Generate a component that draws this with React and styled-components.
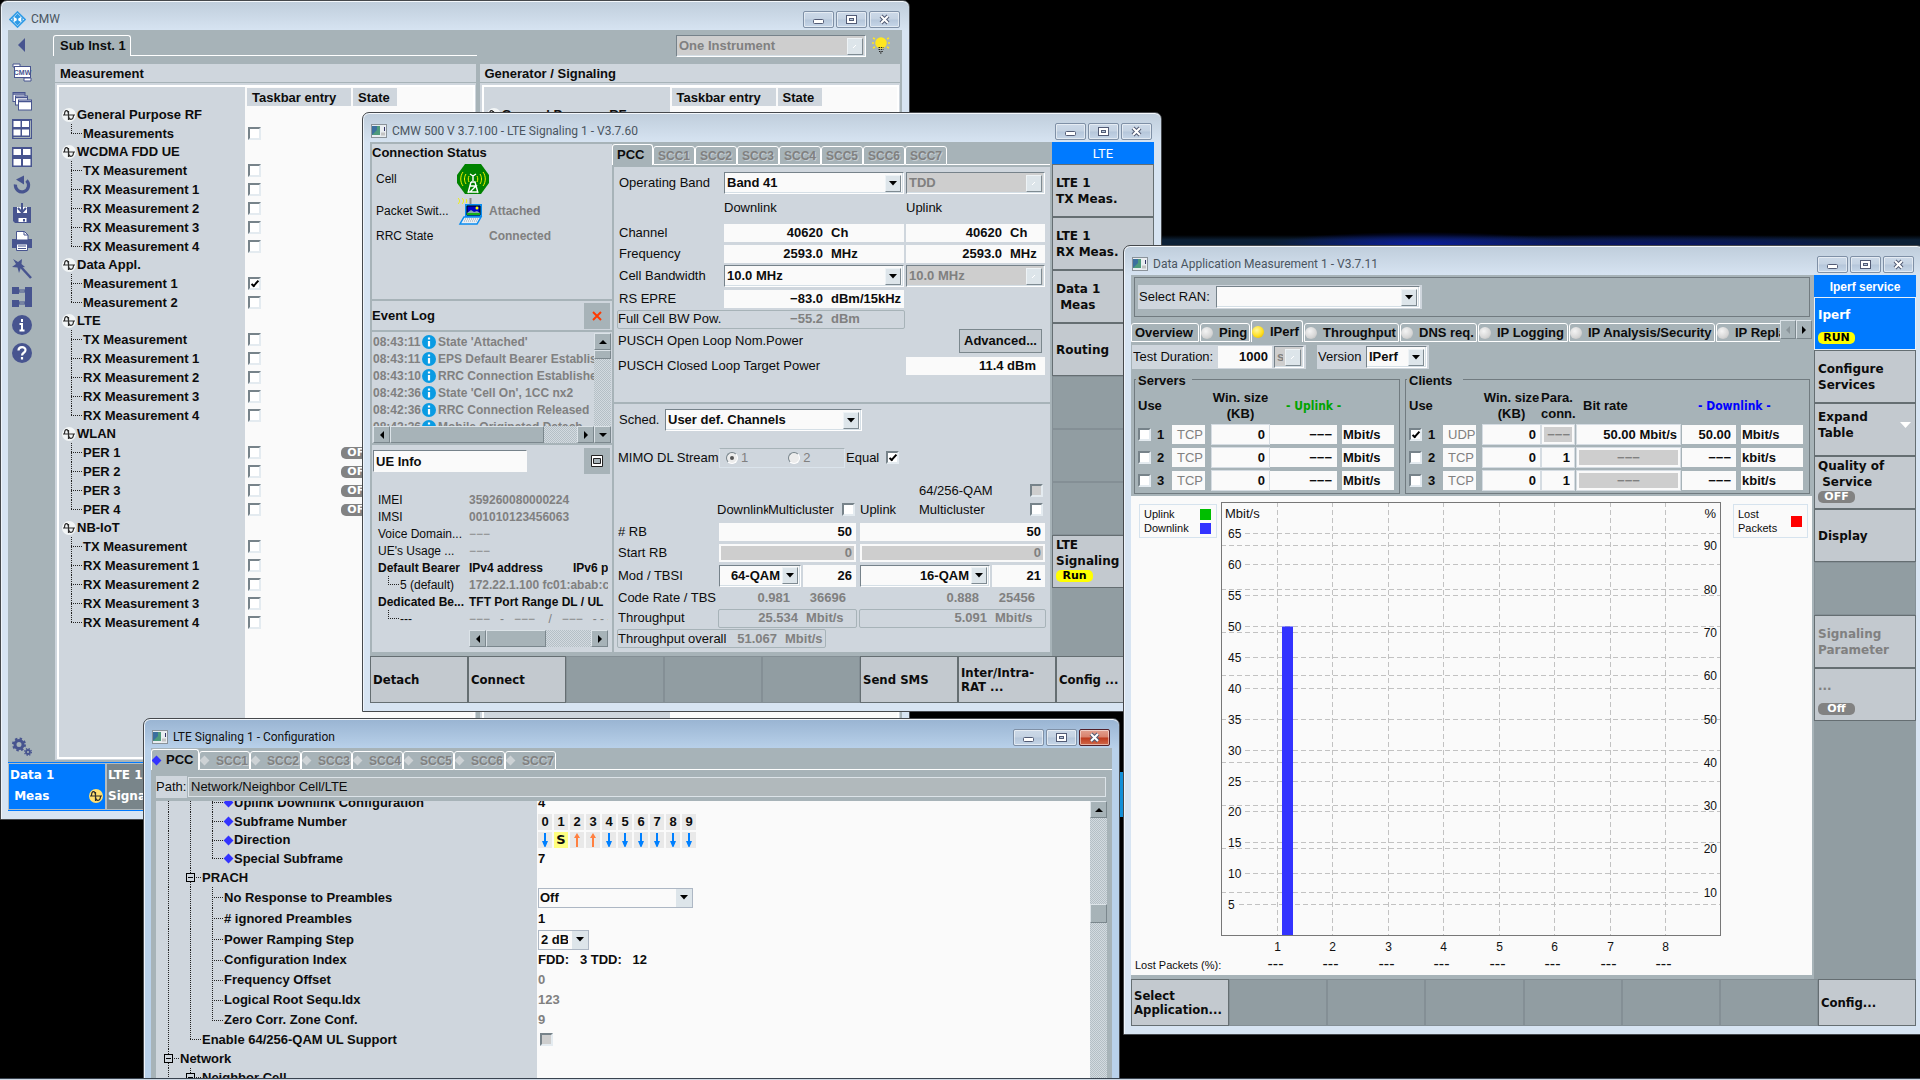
import React from "react";
import styled, { createGlobalStyle, css } from "styled-components";

const sans = '"Liberation Sans", Arial, sans-serif';
const keyFont = '"DejaVu Sans", Verdana, sans-serif';
const keyFontNarrow = '"DejaVu Sans Condensed", "DejaVu Sans", Tahoma, sans-serif';
const titleFont = 'Roboto, "Noto Sans", sans-serif';

const c = {
  base: "#a7b3b8",
  panel: "#cfd6dd",
  paper: "#fafafa",
  grey: "#808080",
  off: "#cecece",
  slot: "#919da2",
  key: "#c3c9cf",
  keyEdge: "#656e72",
  blue: "#007aff",
  icon: "#47548f",
};

const Global = createGlobalStyle`
  *, *::before, *::after { box-sizing: border-box; }
  body { margin: 0; background: #000; overflow: hidden; }
  button, input, select, fieldset, table { font: inherit; color: inherit; margin: 0; }
  ul, h2, h3, p { margin: 0; padding: 0; font: inherit; list-style: none; }
  svg { flex: none; }
`;

/* ---------- desktop and windows ---------- */

const Desktop = styled.main`
  position: relative;
  height: 100vh;
  overflow: hidden;
  background:
    linear-gradient(#118fd8, #118fd8) 1119px 772px / 5px 45px no-repeat,
    radial-gradient(ellipse 150px 12px at 1420px 244px, #0a1c9c, transparent) 0 0 / 100% 250px no-repeat,
    radial-gradient(ellipse 260px 12px at 1640px 246px, #08126c, transparent) 0 0 / 100% 250px no-repeat,
    linear-gradient(transparent 235px, #0c2036 240px) 0 0 / 100% 250px no-repeat,
    #000;
  color: #0c0c0c;
  font: bold 13px/16px ${sans};
  white-space: pre;
`;

const Taskbar = styled.footer`
  position: absolute;
  left: 0;
  right: 0;
  bottom: 0;
  height: 2px;
  background: #cfd9e4;
  border-top: 1px solid #39434f;
`;

const Frame = styled.section`
  position: absolute;
  left: ${(p) => p.$x}px;
  top: ${(p) => p.$y}px;
  width: ${(p) => p.$w}px;
  height: ${(p) => p.$h}px;
  display: flex;
  flex-direction: column;
  padding: 0 7px 8px;
  border: 1px solid #45484c;
  border-radius: 7px 7px 0 0;
  box-shadow: inset 0 1px 0 #f4f8fc, inset 1px 0 0 #eef4fb;
  background: ${(p) =>
    p.$active
      ? "linear-gradient(#99b4d2, #b9d1ea 30px)"
      : "linear-gradient(#bfcddb, #d7e4f2 30px)"};
`;

const TitleBar = styled.header`
  flex: none;
  height: 29px;
  display: flex;
  align-items: center;
  gap: 5px;
  padding: 7px 2px 0 1px;
  color: ${(p) => (p.$active ? "#101010" : "#4a5560")};
  font: 12px/18px ${titleFont};
`;

const Title = styled.h2`
  flex: 1;
`;

const CaptionButtons = styled.div`
  display: flex;
  gap: 2px;
`;

const Caption = styled.button`
  width: 31px;
  height: 17px;
  display: grid;
  place-items: center;
  padding: 0;
  border: 1px solid ${(p) => (p.$red ? "#52202a" : "#7f90a6")};
  border-radius: 2px;
  box-shadow: inset 0 0 0 1px #ffffff80;
  background: ${(p) =>
    p.$red
      ? "linear-gradient(#e2a090, #d8816c 48%, #bd3a1e 52%, #d0694a)"
      : "linear-gradient(#ccd9e8, #c4d2e2 48%, #b5c6da 52%, #c6d6e8)"};
`;

const Client = styled.div`
  flex: 1;
  min-height: 0;
  display: flex;
  flex-direction: column;
  overflow: hidden;
  background: ${c.base};
`;

function AppIcon() {
  return (
    <svg width="16" height="14" viewBox="0 0 16 14">
      <rect x=".5" y=".5" width="15" height="13" fill="#e9edf1" stroke="#8a9299" />
      <rect x="1" y="2" width="8" height="9" fill="#4d9a7c" />
      <path d="M1 2h5v4l-5 5z" fill="#3b6f9e" />
      <path d="M13.500 3v4" stroke="#336" strokeWidth="1" />
      <path d="M10 10h4" stroke="#c3c3c3" strokeWidth="3" />
    </svg>
  );
}

function RsIcon() {
  return (
    <svg width="17" height="17" viewBox="0 0 17 17">
      <path d="M8.500 1 16 8.500 8.500 16 1 8.500z" fill="#fff" stroke="#2f9be6" strokeWidth="1.600" />
      <path d="M5 6l3.500-3.500L12 6 8.500 8zM5 11l3.500 3.500L12 11 8.500 9z" fill="#2f9be6" />
      <path d="M4 6.500v4M13 6.500v4M8.500 4v9" stroke="#2f9be6" strokeWidth="1.500" />
    </svg>
  );
}

function Window({ title, icon, active, x, y, w, h, children }) {
  return (
    <Frame $x={x} $y={y} $w={w} $h={h} $active={active} aria-label={title}>
      <TitleBar $active={active}>
        {icon || <AppIcon />}
        <Title>{title}</Title>
        <CaptionButtons>
          <Caption aria-label="Minimize">
            <svg width="13" height="11" viewBox="0 0 13 11">
              <rect x="1.500" y="5.500" width="10" height="4" rx="1" fill="#fff" stroke="#525b75" />
            </svg>
          </Caption>
          <Caption aria-label="Maximize">
            <svg width="13" height="11" viewBox="0 0 13 11">
              <rect x="1.500" y="1.500" width="10" height="8" fill="#fff" stroke="#525b75" />
              <rect x="4.500" y="4.500" width="4" height="2" fill="#b9c8da" stroke="#525b75" />
            </svg>
          </Caption>
          <Caption $red={active} aria-label="Close">
            <svg width="13" height="11" viewBox="0 0 13 11">
              <path d="M3 2l7 7M10 2l-7 7" stroke="#525b75" strokeWidth="4" />
              <path d="M3 2l7 7M10 2l-7 7" stroke="#fff" strokeWidth="2" />
            </svg>
          </Caption>
        </CaptionButtons>
      </TitleBar>
      <Client>{children}</Client>
    </Frame>
  );
}

/* ---------- shared controls ---------- */

const Check = styled.input.attrs({ type: "checkbox" })`
  appearance: none;
  flex: none;
  width: 13px;
  height: 13px;
  display: inline-grid;
  place-items: center;
  background: ${(p) => (p.disabled ? c.off : "#fff")};
  border: 2px solid;
  border-color: #77838a #e4ebf0 #e4ebf0 #77838a;
  &:checked::after {
    content: "";
    width: 8px;
    height: 4px;
    margin-top: -2px;
    border: solid #000;
    border-width: 0 0 2px 2px;
    rotate: -48deg;
  }
`;

const Radio = styled.input.attrs({ type: "radio" })`
  appearance: none;
  width: 12px;
  height: 12px;
  display: inline-grid;
  place-items: center;
  border-radius: 50%;
  background: #ececec;
  border: 1px solid;
  border-color: #77838a #fff #fff #77838a;
  &:checked::after {
    content: "";
    width: 4px;
    height: 4px;
    border-radius: 50%;
    background: #555;
  }
`;

const SelectBox = styled.span`
  display: grid;
  width: ${(p) => (p.$w ? p.$w + "px" : "100%")};
  height: ${(p) => p.$h || 22}px;
  background: ${(p) => (p.$off ? c.off : c.paper)};
  color: ${(p) => (p.$off ? c.grey : "inherit")};
  border: 1px solid;
  border-color: ${(p) => (p.$flat ? "#adb7c4" : "#76828a #fff #fff #76828a")};
  box-shadow: ${(p) => (p.$flat ? "none" : "inset -1px -1px 0 #d5dfe6")};
  & > * { grid-area: 1 / 1; }
`;

const NativeSelect = styled.select`
  appearance: none;
  min-width: 0;
  border: 0;
  outline: 0;
  opacity: 1;
  background: transparent;
  padding: 0 20px 0 ${(p) => p.$pad || 2}px;
  text-align: ${(p) => (p.$right ? "right" : "left")};
  text-align-last: ${(p) => (p.$right ? "right" : "left")};
`;

const Arrow = styled.span`
  justify-self: end;
  align-self: center;
  width: 16px;
  height: ${(p) => (p.$flat ? "100%" : "17px")};
  margin-right: ${(p) => (p.$flat ? 0 : 2)}px;
  display: grid;
  place-items: center;
  pointer-events: none;
  background: #dde5ea;
  color: ${(p) => (p.$off ? "#fff" : "#000")};
  border: ${(p) => (p.$flat ? 0 : 1)}px solid;
  border-color: #eef3f6 #7f8b92 #7f8b92 #eef3f6;
`;

function Select({ label, value, off, flat, w, h, right, pad, id }) {
  return (
    <SelectBox $w={w} $h={h} $off={off} $flat={flat}>
      <NativeSelect id={id} aria-label={label} disabled={off} $right={right} $pad={pad}>
        <option>{value}</option>
      </NativeSelect>
      <Arrow $off={off} $flat={flat}>
        <svg width="8" height="5" viewBox="0 0 8 5">
          {off ? <path d="M2 4l3-3" stroke="currentColor" /> : <path d="M0 0h8L4 4.500z" fill="currentColor" />}
        </svg>
      </Arrow>
    </SelectBox>
  );
}

const FieldBox = styled.span`
  display: flex;
  align-items: center;
  flex: ${(p) => (p.$w ? "none" : 1)};
  width: ${(p) => (p.$w ? p.$w + "px" : "auto")};
  min-width: 0;
  height: ${(p) => p.$h || 18}px;
  background: ${(p) => (p.$off ? c.off : c.paper)};
  color: ${(p) => (p.$off ? c.grey : "inherit")};
  border: ${(p) => (p.$off ? "2px solid #fafafa" : 0)};
`;

const FieldInput = styled.input`
  flex: 1;
  min-width: 0;
  width: 0;
  border: 0;
  outline: 0;
  padding: 0 ${(p) => p.$pad}px 0 3px;
  background: transparent;
  text-align: ${(p) => p.$align || "right"};
`;

const Unit = styled.span`
  flex: none;
  width: ${(p) => p.$w}px;
  text-align: left;
`;

function Field({ label, value, unit, unitW, off, w, h, pad = 4, align, id }) {
  return (
    <FieldBox $w={w} $h={h} $off={off}>
      <FieldInput id={id} aria-label={label} defaultValue={value} disabled={off} $align={align} $pad={unit ? 8 : pad} />
      {unit && <Unit $w={unitW}>{unit}</Unit>}
    </FieldBox>
  );
}

const hatch = css`
  background: repeating-conic-gradient(#b4bfc5 0 25%, #d3dae0 0 50%) 0 0 / 2px 2px;
`;

const Bar = styled.div`
  ${hatch}
  display: flex;
  flex-direction: ${(p) => (p.$vertical ? "column" : "row")};
  flex: none;
  ${(p) => (p.$vertical ? "width: 17px;" : "height: 17px;")}
`;

const BarButton = styled.button`
  flex: none;
  width: 17px;
  height: 17px;
  display: grid;
  place-items: center;
  padding: 0;
  background: ${c.base};
  color: ${(p) => (p.disabled ? "#8a9499" : "#000")};
  border: 1px solid;
  border-color: #dce3e8 #7b878d #7b878d #dce3e8;
`;

const Thumb = styled.div`
  flex: none;
  ${(p) => (p.$vertical ? `height: ${p.$size}px;` : `width: ${p.$size}px;`)}
  background: ${c.base};
  border: 1px solid;
  border-color: #dce3e8 #7b878d #7b878d #dce3e8;
`;

const Space = styled.div`
  flex: ${(p) => (p.$size ? "none" : 1)};
  flex-basis: ${(p) => (p.$size ? p.$size + "px" : 0)};
`;

const arrows = {
  left: "M6 0v8L2 4z",
  right: "M2 0v8l4-4z",
  up: "M0 6h8L4 2z",
  down: "M0 2h8L4 6z",
};

function ArrowButton({ dir, disabled }) {
  return (
    <BarButton aria-label={"Scroll " + dir} disabled={disabled}>
      <svg width="8" height="8" viewBox="0 0 8 8">
        <path d={arrows[dir]} fill="currentColor" />
      </svg>
    </BarButton>
  );
}

/* ---------- tabs ---------- */

const TabStrip = styled.div`
  flex: none;
  display: flex;
  align-items: flex-end;
  height: ${(p) => p.$h}px;
  width: ${(p) => (p.$w ? p.$w + "px" : "auto")};
  min-width: 0;
  background: ${c.base};
`;

const Tab = styled.button`
  flex: none;
  width: ${(p) => p.$w}px;
  height: ${(p) => p.$h || 19}px;
  display: flex;
  align-items: center;
  gap: ${(p) => p.$gap || 0}px;
  padding: 0 0 0 ${(p) => p.$pad}px;
  overflow: hidden;
  background: ${c.base};
  border: solid #fff;
  border-width: 1px 1px ${(p) => (p.$active ? 0 : 1)}px 1px;
  border-radius: 3px 3px 0 0;
  color: ${(p) => (p.disabled ? "#808080" : "inherit")};
  font-size: ${(p) => (p.disabled ? 12 : 13)}px;
  text-shadow: ${(p) => (p.disabled ? "1px 1px 0 #c6ced3" : "none")};
`;

const TabFill = styled.div`
  flex: 1;
  align-self: stretch;
  border-bottom: 1px solid #fff;
`;

const Diamond = styled.i`
  flex: none;
  width: 7px;
  height: 7px;
  margin: 1px 2px 1px 1px;
  rotate: 45deg;
  background: ${(p) => p.$color};
`;

/* ---------- soft keys ---------- */

const KeyButton = styled.button`
  height: ${(p) => p.$h}px;
  min-width: 0;
  display: flex;
  flex-direction: column;
  justify-content: center;
  padding: 0 0 ${(p) => p.$pb}px ${(p) => (p.$narrow ? 2 : 3)}px;
  overflow: hidden;
  text-align: left;
  background: ${(p) => (p.$on ? c.blue : c.key)};
  border: 1px solid ${(p) => (p.$on ? "#e8f0f8" : c.keyEdge)};
  color: ${(p) => (p.$on ? "#fff" : p.disabled ? "#808080" : "#0c0c0c")};
  font: bold ${(p) => (p.$narrow ? 13 : 12)}px/${(p) => (p.$narrow ? 14 : 16)}px
    ${(p) => (p.$narrow ? keyFontNarrow : keyFont)};
  white-space: pre;
`;

const KeyText = styled.span`
  flex: 1;
  display: flex;
  align-items: center;
  justify-content: space-between;
  padding-right: 4px;
`;

const Badge = styled.span`
  flex: none;
  width: 37px;
  height: 12px;
  border-radius: 5px;
  text-align: center;
  background: ${(p) => (p.$run ? "#ffff00" : "#828282")};
  color: ${(p) => (p.$run ? "#000" : "#fff")};
  font: bold 11px/12px ${keyFont};
`;

const Slot = styled.div`
  height: ${(p) => p.$h}px;
  background: ${c.slot};
  border: solid #848f95;
  border-width: 1px;
`;

const KeyColumn = styled.aside`
  flex: none;
  width: 102px;
  display: flex;
  flex-direction: column;
  background: ${c.slot};
`;

const KeyHead = styled.h3`
  height: 22px;
  background: ${c.blue};
  color: #fff;
  text-align: center;
  font: ${(p) => (p.$small ? "bold" : "normal")} ${(p) => (p.$small ? 12 : 13)}px/24px
    ${(p) => (p.$small ? sans : titleFont)};
`;

const KeyRow = styled.footer`
  flex: none;
  display: grid;
  grid-template-columns: repeat(8, 1fr);
`;

function Key({ text, badge, run, on, disabled, narrow, drop, h = 53 }) {
  return (
    <KeyButton $h={h} $on={on} $narrow={narrow} $pb={badge ? 5 : drop ? 10 : 0} disabled={disabled}>
      <KeyText>
        {text}
        {drop && (
          <svg width="11" height="6" viewBox="0 0 11 6">
            <path d="M0 0h11L5.500 6z" fill="#fff" />
          </svg>
        )}
      </KeyText>
      {badge && <Badge $run={run}>{badge}</Badge>}
    </KeyButton>
  );
}

function KeyFooter({ keys }) {
  return (
    <KeyRow>
      {keys.map((k, i) => (k ? <Key key={i} text={k} narrow h={47} /> : <Slot key={i} $h={47} />))}
    </KeyRow>
  );
}

/* ---------- tree guides ---------- */

const dotsY = "repeating-linear-gradient(to bottom, #222 0 1px, transparent 1px 2px)";
const dotsX = "repeating-linear-gradient(to right, #222 0 1px, transparent 1px 2px)";

const Guide = styled.i`
  flex: none;
  align-self: stretch;
  display: grid;
  align-items: center;
  width: ${(p) => (p.$kind === "line" || p.$kind === "none" ? 22 : 12)}px;
  background:
    ${(p) => (p.$kind === "line" || p.$kind === "none" ? "none" : dotsX)} 0 50% / 11px 1px no-repeat,
    ${(p) => (p.$kind === "none" ? "none" : dotsY)} 0 0 / 1px ${(p) => (p.$kind === "end" ? "50%" : "100%")} no-repeat;
`;

const Toggle = styled.button`
  width: 9px;
  height: 9px;
  display: grid;
  place-items: center;
  padding: 0;
  margin-left: -4px;
  border: 1px solid #000;
  background: ${c.panel};
  &::after {
    content: "";
    width: 5px;
    height: 1px;
    background: #000;
  }
`;

/* ---------- CMW main window ---------- */

const CmwBody = styled.div`
  flex: 1;
  min-height: 0;
  display: flex;
`;

const Sidebar = styled.nav`
  flex: none;
  width: 45px;
  display: flex;
  flex-direction: column;
  padding: 1px 0 1px 2px;
`;

const Tool = styled.button`
  width: 24px;
  height: 28px;
  display: grid;
  place-items: center;
  padding: 0;
  border: 0;
  background: none;
  color: ${c.icon};
`;

const CmwMain = styled.div`
  flex: 1;
  display: flex;
  flex-direction: column;
`;

const CmwTop = styled.div`
  height: 34px;
  display: flex;
  align-items: flex-start;
  & > svg { margin: 6px 12px 0 6px; }
  & > span { margin-top: 5px; }
`;

const Panels = styled.div`
  flex: 1;
  display: grid;
  grid-template-columns: 1fr 1fr;
  gap: 4px;
  padding: 0 2px 2px;
`;

const Panel = styled.section`
  display: flex;
  flex-direction: column;
  background: ${c.panel};
`;

const PanelTitle = styled.h3`
  height: 19px;
  padding-left: 5px;
  line-height: 19px;
  border-bottom: 1px solid ${c.base};
`;

const PanelBody = styled.div`
  flex: 1;
  margin: 2px 1px 1px 2px;
  border: 2px solid #fff;
  background: linear-gradient(to right, ${c.panel} 186px, ${c.paper} 186px);
`;

const ColumnHeads = styled.div`
  display: flex;
  gap: 2px;
  height: 19px;
  padding: 1px 0 0 188px;
`;

const ColumnHead = styled.span`
  width: ${(p) => p.$w}px;
  padding-left: 5px;
  line-height: 19px;
  background: ${c.panel};
`;

const TreeRow = styled.label`
  display: flex;
  align-items: center;
  height: ${(p) => (p.$head ? 18 : 19)}px;
`;

const TreeName = styled.span`
  width: 186px;
  align-self: stretch;
  display: flex;
  align-items: center;
  gap: ${(p) => (p.$head ? 1 : 0)}px;
  padding-left: ${(p) => (p.$head ? 3 : 12)}px;
  margin-right: 3px;
`;

const OffBadge = styled(Badge)`
  margin-left: 80px;
`;

const Tasks = styled.footer`
  flex: none;
  height: 49px;
  display: flex;
  border: solid ${c.blue};
  border-width: 1px 0;
`;

const Task = styled.button`
  width: 98px;
  padding: 0 2px 2px 1px;
  display: flex;
  align-items: flex-end;
  justify-content: space-between;
  text-align: left;
  border: 1px solid #b4bcc0;
  background: ${(p) => (p.$on ? c.blue : "#79858a")};
  color: #fff;
  font: bold 12px/21px ${keyFont};
  white-space: pre;
  & > svg { margin-bottom: 4px; }
`;

function Sine({ fill = "#f2f5f6" }) {
  return (
    <svg width="14" height="14" viewBox="0 0 14 14">
      <circle cx="7" cy="7" r="7" fill={fill} />
      <path
        d="M2.500 7C2.500 1.500 6.500 1 6.500 7S11.500 12.500 11.500 7M1 7h12M6.500 3v9"
        fill="none"
        stroke="#2c2c2c"
        strokeWidth="1.200"
      />
    </svg>
  );
}

const tools = [
  ["Back", <path d="M13 3v14L6 10z" fill="currentColor" />],
  [
    "CMW",
    <>
      <path d="M1 1h7v3H1zM12 15h7v3h-7z" fill="#fff" stroke="currentColor" />
      <rect x="2.500" y="3.500" width="16" height="11" fill="#fff" stroke="currentColor" />
      <text x="10.500" y="12" textAnchor="middle" fontSize="7" fill="currentColor" fontFamily="Liberation Sans">CMW</text>
    </>,
  ],
  [
    "Cascade windows",
    <g fill="#fff" stroke="currentColor">
      <rect x="1" y="1.500" width="12" height="9" />
      <rect x="3.500" y="5" width="12" height="9" />
      <rect x="6.500" y="9" width="13" height="10" />
      <path d="M1 3h12M4 6.500h12M7 10.500h12" strokeWidth="1.500" />
    </g>,
  ],
  [
    "Tile windows",
    <>
      <path d="M0 0h20v20H0z" fill="currentColor" />
      <path d="M1.500 2h7v6h-7zM10 2h7v6h-7zM1.500 10.500h7v6h-7zM10 10.500h7v6h-7z" fill="#fff" />
      <path d="M1.500 18.500h17v-17" fill="none" stroke="#a7b3b8" />
    </>,
  ],
  [
    "Four windows",
    <>
      <path d="M0 0h20v20H0z" fill="currentColor" />
      <path d="M1.500 2h7.500v6H1.500zM11 2h7.500v6H11zM1.500 12h7.500v6.500H1.500zM11 12h7.500v6.500H11z" fill="#fff" />
    </>,
  ],
  [
    "Reset",
    <>
      <path d="M14.500 5.500A6.600 6.600 0 1 1 3.400 9.500" fill="none" stroke="currentColor" strokeWidth="3.200" />
      <path d="M4 4.500 12 0.500v9z" fill="currentColor" />
    </>,
  ],
  [
    "Save",
    <>
      <path d="M1 4h18v16H3l-2-2z" fill="currentColor" />
      <path d="M5 4h10v6H5zM6.500 15h8v4h-8z" fill="#fff" />
      <path d="M12 16v2.500" stroke="currentColor" strokeWidth="2" />
      <path d="M10 0v8M6 5l4 4.500L14 5" fill="none" stroke="currentColor" strokeWidth="2" />
    </>,
  ],
  [
    "Print",
    <>
      <path d="M0 8h20v9H0z" fill="currentColor" />
      <path d="M4.500 9V.500h8l3.500 3.500v5z" fill="#fff" stroke="currentColor" />
      <path d="M12 .500V4h4" fill="none" stroke="currentColor" />
      <path d="M4.500 13h11v6.500h-11z" fill="#fff" stroke="currentColor" />
      <path d="M6 15h8M6 17.500h8" stroke="currentColor" />
    </>,
  ],
  [
    "Wizard",
    <>
      <path d="M8 7l11 12" stroke="currentColor" strokeWidth="2.500" />
      <path d="M1 0l5 3 4-3-.500 5L13 8l-4 .500L7 14 5.500 8.500 0 8l4-3z" fill="currentColor" />
    </>,
  ],
  [
    "Routing",
    <>
      <path d="M0 0h7v7H0zM0 13h7v7H0zM13 0h7v20h-7z" fill="currentColor" />
      <path d="M7 3h6v2H7zM7 15h6v2H7z" fill="none" stroke="currentColor" />
    </>,
  ],
  [
    "Info",
    <>
      <circle cx="10" cy="10" r="10" fill="currentColor" />
      <path d="M10 4v3M7.500 9H10v6.500M7.500 15.500h5" fill="none" stroke="#fff" strokeWidth="2" />
    </>,
  ],
  [
    "Help",
    <>
      <circle cx="10" cy="10" r="10" fill="currentColor" />
      <path d="M6.500 7.500C6.500 3 13.500 3 13.500 7c0 3-3.500 2.500-3.500 5.500M10 14v2.500" fill="none" stroke="#fff" strokeWidth="2.200" />
    </>,
  ],
];

function Gears() {
  return (
    <svg width="20" height="20" viewBox="0 0 20 20">
      <g fill="none" stroke={c.icon}>
        <circle cx="7" cy="7.500" r="4" strokeWidth="3" />
        <circle cx="7" cy="7.500" r="6" strokeWidth="2" strokeDasharray="2.400 2.300" />
        <circle cx="16" cy="15" r="2" strokeWidth="1.800" />
        <circle cx="16" cy="15" r="3.400" strokeWidth="1.200" strokeDasharray="1.300 1.400" />
      </g>
    </svg>
  );
}

const rx = ["TX Measurement", "RX Measurement 1", "RX Measurement 2", "RX Measurement 3", "RX Measurement 4"];
const groups = [
  { name: "General Purpose RF", items: ["Measurements"] },
  { name: "WCDMA FDD UE", items: rx },
  { name: "Data Appl.", items: ["Measurement 1", "Measurement 2"], on: 0 },
  { name: "LTE", items: rx },
  { name: "WLAN", items: ["PER 1", "PER 2", "PER 3", "PER 4"], off: true },
  { name: "NB-IoT", items: rx },
];

function TreePanel({ title, data }) {
  return (
    <Panel>
      <PanelTitle>{title}</PanelTitle>
      <PanelBody>
        <ColumnHeads>
          <ColumnHead $w={104}>Taskbar entry</ColumnHead>
          <ColumnHead $w={44}>State</ColumnHead>
        </ColumnHeads>
        {data.map((g) => (
          <div key={g.name}>
            <TreeRow as="div" $head>
              <TreeName $head>
                <Sine />
                {g.name}
              </TreeName>
            </TreeRow>
            {g.items.map((n, i) => (
              <TreeRow key={n}>
                <TreeName>
                  <Guide $kind={i === g.items.length - 1 ? "end" : "tee"} />
                  {n}
                </TreeName>
                <Check defaultChecked={g.on === i} />
                {g.off && <OffBadge>OFF</OffBadge>}
              </TreeRow>
            ))}
          </div>
        ))}
      </PanelBody>
    </Panel>
  );
}

function CmwWindow() {
  return (
    <Window title="CMW" icon={<RsIcon />} x={0} y={0} w={910} h={820}>
      <CmwBody>
        <Sidebar>
          {tools.map(([name, art]) => (
            <Tool key={name} aria-label={name}>
              <svg width="20" height="20" viewBox="0 0 20 20">{art}</svg>
            </Tool>
          ))}
          <Space />
          <Tool aria-label="Setup">
            <Gears />
          </Tool>
        </Sidebar>
        <CmwMain>
          <CmwTop>
            <TabStrip $h={26} $w={424}>
              <Tab $w={78} $h={21} $pad={6} $active>Sub Inst. 1</Tab>
              <TabFill />
            </TabStrip>
            <Space />
            <Select label="Instrument" value="One Instrument" off w={190} />
            <svg width="18" height="18" viewBox="0 0 18 18">
              <circle cx="9" cy="7" r="5.800" fill="#ffe620" />
              <path d="M1 2l2 1M17 2l-2 1M0 7h2M16 7h2M1 12l2-1M17 12l-2-1" stroke="#ffe620" strokeWidth="1.500" />
              <path d="M6.500 11.500h5M6.500 13.500h5M7 15.500h4M8 17h2" stroke="#222" strokeDasharray="1.500 .800" />
            </svg>
          </CmwTop>
          <Panels>
            <TreePanel title="Measurement" data={groups} />
            <TreePanel title="Generator / Signaling" data={groups.slice(0, 1)} />
          </Panels>
        </CmwMain>
      </CmwBody>
      <Tasks>
        <Task $on>
          {"Data 1\n Meas"}
          <Sine fill="#ffdf70" />
        </Task>
        <Task>{"LTE 1\nSignaling"}</Task>
      </Tasks>
    </Window>
  );
}

/* ---------- LTE signaling window ---------- */

const SigBody = styled.div`
  flex: 1;
  min-height: 0;
  display: flex;
`;

const SigLeft = styled.div`
  flex: none;
  width: 242px;
  display: flex;
  flex-direction: column;
  gap: 2px;
  padding: 2px 0 4px 2px;
  font-size: 12px;
`;

const Status = styled.section`
  height: 155px;
  background: ${c.panel};
`;

const Heading = styled.h3`
  font-size: 13px;
  line-height: 18px;
`;

const StatusRow = styled.div`
  display: grid;
  grid-template-columns: 81px 32px 1fr;
  align-items: center;
  height: ${(p) => p.$h}px;
  padding-left: 4px;
`;

const Plain = styled.span`
  font-weight: normal;
`;

const Muted = styled.span`
  color: ${c.grey};
`;

const LogHead = styled.div`
  height: 29px;
  display: flex;
  align-items: center;
  justify-content: space-between;
  padding-right: 2px;
  background: ${c.panel};
`;

const SmallTool = styled.button`
  width: 26px;
  height: 26px;
  display: grid;
  place-items: center;
  padding: 0;
  border: 0;
  background: ${c.base};
`;

const Log = styled.section`
  height: 111px;
  display: grid;
  grid-template-columns: 1fr 17px;
  padding: 1px 1px 0 1px;
  background: ${c.panel};
`;

const LogMain = styled.div`
  min-width: 0;
  display: flex;
  flex-direction: column;
`;

const LogList = styled.ul`
  height: 93px;
  overflow: hidden;
  color: ${c.grey};
`;

const LogItem = styled.li`
  display: flex;
  align-items: center;
  height: 17px;
  gap: 2px;
  & > time {
    flex: none;
    width: 47px;
  }
`;

const Ue = styled.section`
  flex: 1;
  padding: 3px 2px 0 1px;
  background: ${c.panel};
`;

const UeTop = styled.div`
  display: flex;
  justify-content: space-between;
  align-items: center;
  margin-bottom: 17px;
  font-size: 13px;
`;

const UeTitle = styled.input`
  width: 154px;
  height: 22px;
  padding: 0 2px;
  background: ${c.paper};
  border: 1px solid;
  border-color: #76828a ${c.paper} ${c.paper} #76828a;
`;

const UeRow = styled.div`
  display: grid;
  grid-template-columns: 91px 104px 1fr;
  align-items: center;
  height: 17px;
  padding-left: 5px;
  overflow: hidden;
  margin-right: 2px;
`;

const UeCell = styled.span`
  display: flex;
  align-items: center;
  height: 17px;
  min-width: 0;
  font-weight: ${(p) => (p.$b ? "bold" : "normal")};
  color: ${(p) => (p.$m ? c.grey : "inherit")};
  padding-left: ${(p) => (p.$in ? 10 : 0)}px;
`;

const UeScroll = styled.div`
  margin: 3px 2px 0 96px;
`;

const SigForm = styled.form`
  flex: 1;
  min-width: 0;
  display: flex;
  flex-direction: column;
  padding-bottom: 4px;
  padding-right: 2px;
`;

const Section = styled.div`
  flex: ${(p) => (p.$grow ? 1 : "none")};
  height: ${(p) => (p.$h ? p.$h + "px" : "auto")};
  margin: 0 0 0 2px;
  padding: 5px 0 0 4px;
  border-bottom: ${(p) => (p.$grow ? 0 : 2)}px solid ${c.base};
  background: ${c.panel};
`;

const Row = styled.div`
  display: grid;
  grid-template-columns: ${(p) => p.$cols};
  column-gap: ${(p) => p.$gap}px;
  align-items: center;
  height: ${(p) => p.$h}px;
  margin-top: ${(p) => p.$mt || 0}px;
`;

const Label = styled.label`
  font-weight: normal;
  padding-left: ${(p) => p.$pl || 0}px;
  width: ${(p) => (p.$w ? p.$w + "px" : "auto")};
  overflow: hidden;
`;

const Span2 = styled.span`
  grid-column: 1 / 3;
  font-weight: normal;
`;

const Outline = styled.span`
  display: flex;
  align-items: center;
  height: 19px;
  margin: 0 -1px;
  border: 1px solid ${c.base};
  border-radius: 2px;
  color: ${c.grey};
  grid-column: ${(p) => p.$col || "auto"};
  width: ${(p) => (p.$w ? p.$w + "px" : "auto")};
`;

const OutName = styled.span`
  font-weight: normal;
  color: #0c0c0c;
`;

const OutVal = styled.span`
  flex: 1;
  padding-right: 8px;
  text-align: right;
`;

const Advanced = styled.button`
  justify-self: end;
  width: 83px;
  height: 24px;
  margin-right: 3px;
  padding: 0;
  background: #c3cad0;
  border: 1px solid #7b878d;
`;

const Streams = styled.fieldset`
  width: 126px;
  height: 20px;
  display: flex;
  align-items: center;
  gap: 40px;
  padding: 0 6px;
  border: 1px solid #dbe4ec;
  border-top-color: ${c.base};
  color: ${c.grey};
  font-weight: normal;
  & > label {
    display: flex;
    align-items: center;
    gap: 3px;
  }
`;

const Flex = styled.div`
  display: flex;
  align-items: center;
  height: ${(p) => (p.$h ? p.$h + "px" : "auto")};
  margin-top: ${(p) => p.$mt || 0}px;
`;

const Pair = styled.span`
  display: flex;
  gap: 2px;
`;

const Right = styled.span`
  display: flex;
  justify-content: flex-end;
  padding-right: 10px;
  color: ${c.grey};
  & > span {
    width: 56px;
    text-align: right;
  }
`;

const QamCell = styled.span`
  display: grid;
  grid-template-columns: 59px 1fr auto;
  align-items: center;
  grid-column: 3;
  padding-right: 2px;
  font-weight: normal;
`;

const ClusterCell = styled.span`
  display: grid;
  grid-template-columns: 51px 74px auto;
  align-items: center;
  margin-left: -2px;
  font-weight: normal;
`;

function InfoDot() {
  return (
    <svg width="14" height="14" viewBox="0 0 14 14">
      <circle cx="7" cy="7" r="7" fill="#0a9be3" />
      <path d="M7 2.500v2M7 6v5.500" stroke="#fff" strokeWidth="2.200" />
    </svg>
  );
}

function CellIcon() {
  return (
    <svg width="32" height="30" viewBox="0 0 32 30">
      <path d="M8 0h16l8 11v8l-8 11H8L0 19v-8z" fill="#008200" />
      <path
        d="M9 10c-2 3-2 7 0 10M6 8c-3 4-3 10 0 14M12 12c-1 2-1 4 0 6M23 10c2 3 2 7 0 10M26 8c3 4 3 10 0 14M20 12c1 2 1 4 0 6"
        fill="none"
        stroke="#f3f300"
      />
      <path d="M16 11v6M13 10l3 2 3-2M14 18h4l3 11M14 18l-3 11M13 22h6l-6 6M12 28h8" fill="none" stroke="#fff" strokeWidth="1.400" />
    </svg>
  );
}

function LaptopIcon() {
  return (
    <svg width="27" height="28" viewBox="0 0 27 28">
      <path d="M1 1c2 2 2 4 0 6M5 1c2 2 2 4 0 6M9 2c1 1 1 3 0 4" fill="none" stroke="#f3f300" />
      <path d="M13.500 1v7" stroke="#888" strokeWidth="2" />
      <path d="M8 7h17v13H8z" fill="#0a8cf0" />
      <path d="M10 9h13v9H10z" fill="#0000c8" stroke="#000" />
      <path d="M10 18v-2l4-3 3 2 3-1 3 2v2z" fill="#8aa" />
      <path d="M10 17h13" stroke="#18b018" strokeWidth="2" />
      <circle cx="20" cy="11" r="1.500" fill="#ff0" />
      <path d="M7 20h17l-4 7H3z" fill="#e8eef4" stroke="#0a8cf0" strokeWidth="1.500" />
      <path d="M8 22h13M7 24h13" stroke="#9aa6b0" strokeDasharray="1 1" />
    </svg>
  );
}

const log = [
  ["08:43:11", "State 'Attached'"],
  ["08:43:11", "EPS Default Bearer Established"],
  ["08:43:10", "RRC Connection Established"],
  ["08:42:36", "State 'Cell On', 1CC nx2"],
  ["08:42:36", "RRC Connection Released"],
  ["08:42:36", "Mobile Originated Detach"],
];

function SigLeftPane() {
  return (
    <SigLeft>
      <Status>
        <Heading>Connection Status</Heading>
        <StatusRow $h={34}>
          <Plain>Cell</Plain>
          <CellIcon />
        </StatusRow>
        <StatusRow $h={29}>
          <Plain>Packet Swit...</Plain>
          <LaptopIcon />
          <Muted>Attached</Muted>
        </StatusRow>
        <StatusRow $h={22}>
          <Plain>RRC State</Plain>
          <span />
          <Muted>Connected</Muted>
        </StatusRow>
      </Status>
      <LogHead>
        <Heading>Event Log</Heading>
        <SmallTool aria-label="Clear log">
          <svg width="10" height="10" viewBox="0 0 10 10">
            <path d="M1 1l8 8M9 1L1 9" stroke="#ff3a00" strokeWidth="2" />
          </svg>
        </SmallTool>
      </LogHead>
      <Log>
        <LogMain>
          <LogList>
            {log.map(([t, m], i) => (
              <LogItem key={i}>
                <time>{t}</time>
                <InfoDot />
                {m}
              </LogItem>
            ))}
          </LogList>
          <Bar>
            <ArrowButton dir="left" />
            <Thumb $size={154} />
            <Space />
            <ArrowButton dir="right" />
          </Bar>
        </LogMain>
        <Bar $vertical>
          <ArrowButton dir="up" />
          <Thumb $vertical $size={9} />
          <Space />
          <ArrowButton dir="down" />
        </Bar>
      </Log>
      <Ue>
        <UeTop>
          <UeTitle defaultValue="UE Info" aria-label="UE Info" />
          <SmallTool aria-label="Show UE info window">
            <svg width="12" height="12" viewBox="0 0 12 12">
              <path d="M.500.500h11v11H.500z" fill="#fff" stroke="#222" />
              <path d="M2.500 3.500h7v5h-7z" fill={c.base} stroke="#222" />
            </svg>
          </SmallTool>
        </UeTop>
        <UeRow><UeCell>IMEI</UeCell><UeCell $b $m>359260080000224</UeCell></UeRow>
        <UeRow><UeCell>IMSI</UeCell><UeCell $b $m>001010123456063</UeCell></UeRow>
        <UeRow><UeCell>Voice Domain...</UeCell><UeCell $m>−−−</UeCell></UeRow>
        <UeRow><UeCell>UE's Usage ...</UeCell><UeCell $m>−−−</UeCell></UeRow>
        <UeRow><UeCell $b>Default Bearer</UeCell><UeCell $b>IPv4 address</UeCell><UeCell $b>IPv6 prefix</UeCell></UeRow>
        <UeRow><UeCell $in><Guide $kind="end" />5 (default)</UeCell><UeCell $b $m>172.22.1.100 fc01:abab:cdcd</UeCell></UeRow>
        <UeRow><UeCell $b>Dedicated Be...</UeCell><UeCell $b>TFT Port Range DL / UL</UeCell></UeRow>
        <UeRow><UeCell $in><Guide $kind="end" />---</UeCell><UeCell $m>{"−−−   -   −−−    /   −−−   - - -"}</UeCell></UeRow>
        <UeScroll>
          <Bar>
            <ArrowButton dir="left" />
            <Thumb $size={60} />
            <Space />
            <ArrowButton dir="right" />
          </Bar>
        </UeScroll>
      </Ue>
    </SigLeft>
  );
}

function SigFormPane() {
  const top = { $cols: "104px 180px 139px", $gap: 2 };
  const low = { $cols: "97px 137px 185px", $gap: 4 };
  return (
    <SigForm>
      <TabStrip $h={23}>
        <Tab type="button" $w={41} $h={21} $pad={4} $active>PCC</Tab>
        {[1, 2, 3, 4, 5, 6, 7].map((n) => (
          <Tab type="button" key={n} $w={42} $pad={4} disabled>{"SCC" + n}</Tab>
        ))}
        <TabFill />
      </TabStrip>
      <Space $size={2} />
      <Section $h={237}>
        <Row {...top} $h={22}>
          <Label htmlFor="band" $pl={1}>Operating Band</Label>
          <Select id="band" value="Band 41" />
          <Select label="Duplex mode" value="TDD" off />
        </Row>
        <Row {...top} $h={28}>
          <span />
          <Plain>Downlink</Plain>
          <Plain>Uplink</Plain>
        </Row>
        <Row {...top} $h={21}>
          <Label htmlFor="ch" $pl={1}>Channel</Label>
          <Field id="ch" value="40620" unit="Ch" unitW={73} />
          <Field label="Uplink channel" value="40620" unit="Ch" unitW={35} />
        </Row>
        <Row {...top} $h={21}>
          <Label htmlFor="freq" $pl={1}>Frequency</Label>
          <Field id="freq" value="2593.0" unit="MHz" unitW={73} />
          <Field label="Uplink frequency" value="2593.0" unit="MHz" unitW={35} />
        </Row>
        <Row {...top} $h={24}>
          <Label htmlFor="bw" $pl={1}>Cell Bandwidth</Label>
          <Select id="bw" value="10.0 MHz" />
          <Select label="Uplink bandwidth" value="10.0 MHz" off />
        </Row>
        <Row {...top} $h={21}>
          <Label htmlFor="epre" $pl={1}>RS EPRE</Label>
          <Field id="epre" value="−83.0" unit="dBm/15kHz" unitW={73} />
        </Row>
        <Row {...top} $h={20}>
          <Outline $col="1 / 3">
            <OutName>Full Cell BW Pow.</OutName>
            <OutVal>−55.2</OutVal>
            <Unit $w={73}>dBm</Unit>
          </Outline>
        </Row>
        <Row {...top} $h={24}>
          <Span2>PUSCH Open Loop Nom.Power</Span2>
          <Advanced type="button">Advanced...</Advanced>
        </Row>
        <Row {...top} $h={25}>
          <Span2 as="label" htmlFor="clp">PUSCH Closed Loop Target Power</Span2>
          <Field id="clp" value="11.4 dBm" pad={9} />
        </Row>
      </Section>
      <Section $grow>
        <Flex $h={22}>
          <Label htmlFor="sched" $w={47} $pl={1}>Sched.</Label>
          <Select id="sched" value="User def. Channels" w={197} />
        </Flex>
        <Flex $h={21} $mt={16}>
          <Label as="span" $w={101}>MIMO DL Stream</Label>
          <Streams disabled>
            <label><Radio name="mimo" defaultChecked />1</label>
            <label><Radio name="mimo" />2</label>
          </Streams>
          <Label htmlFor="equal" $w={41} $pl={1}>Equal</Label>
          <Check id="equal" defaultChecked />
        </Flex>
        <Row {...low} $h={19} $mt={13}>
          <QamCell as="label"><span /><span>64/256-QAM</span><Check disabled /></QamCell>
        </Row>
        <Row {...low} $h={19}>
          <span />
          <ClusterCell as="label"><Label as="span">Downlink</Label><span>Multicluster</span><Check /></ClusterCell>
          <QamCell as="label"><span>Uplink</span><span>Multicluster</span><Check /></QamCell>
        </Row>
        <Row {...low} $h={21} $mt={2}>
          <Label htmlFor="rb"># RB</Label>
          <Field id="rb" value="50" />
          <Field label="Uplink RB" value="50" />
        </Row>
        <Row {...low} $h={21}>
          <Label htmlFor="srb">Start RB</Label>
          <Field id="srb" value="0" off pad={2} />
          <Field label="Uplink start RB" value="0" off pad={2} />
        </Row>
        <Row {...low} $h={25}>
          <Label htmlFor="mod">Mod / TBSI</Label>
          <Pair>
            <Select id="mod" value="64-QAM" right />
            <Field label="TBSI" value="26" w={53} h={22} />
          </Pair>
          <Pair>
            <Select label="Uplink modulation" value="16-QAM" right />
            <Field label="Uplink TBSI" value="21" w={53} h={22} />
          </Pair>
        </Row>
        <Row {...low} $h={20}>
          <Plain>Code Rate / TBS</Plain>
          <Right><span>0.981</span><span>36696</span></Right>
          <Right><span>0.888</span><span>25456</span></Right>
        </Row>
        <Row {...low} $h={20}>
          <Plain>Throughput</Plain>
          <Outline><OutVal>25.534</OutVal><Unit $w={50}>Mbit/s</Unit></Outline>
          <Outline><OutVal>5.091</OutVal><Unit $w={50}>Mbit/s</Unit></Outline>
        </Row>
        <Flex $h={21}>
          <Outline $w={209}>
            <OutName>Throughput overall</OutName>
            <OutVal>51.067</OutVal>
            <Unit $w={40}>Mbit/s</Unit>
          </Outline>
        </Flex>
      </Section>
    </SigForm>
  );
}

function SignalingWindow() {
  return (
    <Window title="CMW 500 V 3.7.100 - LTE Signaling 1 - V3.7.60" x={362} y={112} w={800} h={600}>
      <SigBody>
        <SigLeftPane />
        <SigFormPane />
        <KeyColumn>
          <KeyHead>LTE</KeyHead>
          <Key text={"LTE 1\nTX Meas."} />
          <Key text={"LTE 1\nRX Meas."} />
          <Key text={"Data 1\n Meas"} />
          <Key text="Routing" />
          <Slot $h={53} />
          <Slot $h={53} />
          <Slot $h={53} />
          <Key text={"LTE\nSignaling"} badge="Run" run />
        </KeyColumn>
      </SigBody>
      <KeyFooter keys={["Detach", "Connect", "", "", "", "Send SMS", "Inter/Intra-\nRAT ...", "Config ..."]} />
    </Window>
  );
}

/* ---------- configuration window ---------- */

const PathRow = styled.div`
  flex: none;
  display: flex;
  gap: 1px;
  margin: 6px 6px 3px 5px;
  height: 22px;
  font-weight: normal;
  & > label {
    width: 31px;
    line-height: 22px;
    background: ${c.panel};
  }
`;

const PathField = styled.input`
  flex: 1;
  min-width: 0;
  margin: 1px 0;
  padding: 0 2px;
  background: #b1b9bc;
  border: 1px solid #dce3e8;
`;

const ConfigView = styled.div`
  flex: 1;
  min-height: 0;
  display: flex;
  margin: 0 5px;
  background: linear-gradient(to right, ${c.panel} 381px, ${c.paper} 381px);
  overflow: hidden;
`;

const ConfigRows = styled.div`
  flex: 1;
  margin-top: -8px;
`;

const ConfigRow = styled.div`
  display: flex;
  align-items: center;
  height: ${(p) => p.$h}px;
`;

const ConfigName = styled.span`
  width: 382px;
  align-self: stretch;
  display: flex;
  align-items: center;
  padding-left: 12px;
`;

const Cells = styled.span`
  display: flex;
  gap: 2px;
`;

const CellBox = styled.span`
  width: 14px;
  height: 16px;
  display: grid;
  place-items: center;
  background: ${(p) => (p.$s ? "#ffff80" : "#e9e9e9")};
  font-family: ${(p) => (p.$s ? keyFont : sans)};
`;

const CheckCell = styled.span`
  display: flex;
  padding-left: 2px;
`;

const configRows = [
  [19, ["line", "line", "tee"], "Uplink Downlink Configuration", "4", 1],
  [19, ["line", "line", "tee"], "Subframe Number", "numbers", 1],
  [18, ["line", "line", "tee"], "Direction", "dirs", 1],
  [19, ["line", "line", "end"], "Special Subframe", "7", 1],
  [19, ["line", "box"], "PRACH", ""],
  [21, ["line", "line", "tee"], "No Response to Preambles", "off"],
  [21, ["line", "line", "tee"], "# ignored Preambles", "1"],
  [21, ["line", "line", "tee"], "Power Ramping Step", "db"],
  [20, ["line", "line", "tee"], "Configuration Index", "FDD:   3 TDD:   12"],
  [20, ["line", "line", "tee"], "Frequency Offset", "~0"],
  [20, ["line", "line", "tee"], "Logical Root Sequ.Idx", "~123"],
  [20, ["line", "line", "end"], "Zero Corr. Zone Conf.", "~9"],
  [19, ["line", "end"], "Enable 64/256-QAM UL Support", "check"],
  [19, ["box"], "Network", ""],
  [19, ["line", "box"], "Neighbor Cell", ""],
];

function DirArrow({ up }) {
  return (
    <svg width="8" height="14" viewBox="0 0 8 14">
      {up ? (
        <path d="M4 0l3 5H5v9H3V5H1z" fill="#ff8040" />
      ) : (
        <path d="M3 0h2v8h2L4.500 14h-1L1 8h2z" fill="#0080ff" />
      )}
    </svg>
  );
}

function ConfigValue({ v, name }) {
  if (v === "numbers")
    return <Cells>{[..."0123456789"].map((n) => <CellBox key={n}>{n}</CellBox>)}</Cells>;
  if (v === "dirs")
    return (
      <Cells>
        {[..."DSUUDDDDDD"].map((d, i) => (
          <CellBox key={i} $s={d === "S"}>{d === "S" ? "S" : <DirArrow up={d === "U"} />}</CellBox>
        ))}
      </Cells>
    );
  if (v === "off") return <Select label={name} value="Off" flat w={155} h={20} pad={1} />;
  if (v === "db") return <Select label={name} value="2 dB" flat w={51} h={20} pad={2} />;
  if (v === "check") return <CheckCell><Check disabled aria-label={name} /></CheckCell>;
  if (v[0] === "~") return <Muted>{v.slice(1)}</Muted>;
  return v;
}

function ConfigWindow() {
  return (
    <Window title="LTE Signaling 1 - Configuration" active x={143} y={718} w={977} h={400}>
      <TabStrip $h={22}>
        <Tab $w={48} $h={21} $pad={0} $gap={4} $active>
          <Diamond $color="#3333ff" />
          PCC
        </Tab>
        {[1, 2, 3, 4, 5, 6, 7].map((n) => (
          <Tab key={n} $w={51} $pad={0} $gap={6} disabled>
            <Diamond $color="#cdd2d5" />
            {"SCC" + n}
          </Tab>
        ))}
        <TabFill />
      </TabStrip>
      <PathRow>
        <label htmlFor="path">Path:</label>
        <PathField id="path" readOnly value="Network/Neighbor Cell/LTE" />
      </PathRow>
      <ConfigView>
        <ConfigRows>
          {configRows.map(([h, guides, name, value, mark]) => (
            <ConfigRow key={name} $h={h}>
              <ConfigName>
                {guides.map((g, i) => (
                  <Guide key={i} $kind={g}>{g === "box" && <Toggle aria-label={"Collapse " + name} />}</Guide>
                ))}
                {mark && <Diamond $color="#3333ff" />}
                {name}
              </ConfigName>
              <ConfigValue v={value} name={name} />
            </ConfigRow>
          ))}
        </ConfigRows>
        <Bar $vertical>
          <ArrowButton dir="up" />
          <Space $size={86} />
          <Thumb $vertical $size={19} />
        </Bar>
      </ConfigView>
    </Window>
  );
}

/* ---------- data application window ---------- */

const DataMain = styled.div`
  flex: 1;
  min-width: 0;
  display: flex;
  flex-direction: column;
  margin-right: 2px;
`;

const RanBox = styled.div`
  flex: none;
  height: 40px;
  display: flex;
  align-items: center;
  margin: 2px 2px 3px 3px;
  padding-left: 3px;
  border: 1px solid #717b80;
`;

const Group = styled.div`
  display: flex;
  align-items: center;
  height: 24px;
  padding: 0 2px 0 1px;
  background: ${c.panel};
`;

const Led = styled.i`
  flex: none;
  width: 12px;
  height: 12px;
  border-radius: 50%;
  background: ${(p) =>
    p.$on
      ? "radial-gradient(circle at 40% 35%, #fff6a0, #ffe020 55%, #d8a800)"
      : "radial-gradient(circle at 40% 35%, #f4f4f4, #d6d6d6 60%, #b4b4b4)"};
`;

const DataTabs = styled.div`
  flex: none;
  display: flex;
  align-items: flex-end;
  height: 22px;
`;

const TabClip = styled.div`
  flex: 1;
  min-width: 0;
  display: flex;
  align-items: flex-end;
  gap: 1px;
  overflow: hidden;
`;

const TabScroll = styled.div`
  align-self: flex-start;
  display: flex;
  & > button { width: 16px; height: 19px; }
`;

const Options = styled.div`
  flex: none;
  display: flex;
  gap: 11px;
  margin: 3px 0 4px 1px;
`;

const Boxes = styled.div`
  flex: none;
  display: flex;
  gap: 5px;
  padding: 0 2px 2px 3px;
`;

const Box = styled.fieldset`
  flex: ${(p) => (p.$w ? "none" : 1)};
  width: ${(p) => (p.$w ? p.$w + "px" : "auto")};
  min-width: 0;
  height: 122px;
  margin-top: -1px;
  padding: 0 1px;
  border: 1px solid #717b80;
  & > legend {
    width: 56px;
    padding: 0 2px;
    height: 15px;
    line-height: 17px;
  }
`;

const Table = styled.table`
  width: 100%;
  table-layout: fixed;
  border-collapse: collapse;
  th {
    height: 36px;
    padding: 2px 0 0;
    line-height: 16px;
    text-align: center;
  }
  td {
    height: 23px;
    padding: 0;
    vertical-align: middle;
  }
`;

const Th = styled.th`
  && {
    text-align: ${(p) => p.$align};
    padding-left: ${(p) => p.$pl || 0}px;
  }
  color: ${(p) => p.$color || "inherit"};
  ${(p) => p.$color && css`font: bold 12px/16px ${keyFontNarrow};`}
`;

const Use = styled.label`
  display: flex;
  align-items: center;
  gap: 6px;
  padding-left: 2px;
`;

const Cell = styled.div`
  height: 19px;
  width: ${(p) => p.$w}px;
  padding: 0 ${(p) => (p.$align === "left" ? 1 : 5)}px;
  line-height: 19px;
  text-align: ${(p) => p.$align || "right"};
  background: ${c.paper};
  font-weight: ${(p) => (p.$proto ? "normal" : "bold")};
  color: ${(p) => (p.$proto ? c.grey : "inherit")};
`;

const CellWrap = styled.div`
  display: flex;
  width: ${(p) => p.$w}px;
  border: 1px solid #d5dce2;
`;

const ChartArea = styled.div`
  flex: 1;
  min-height: 0;
  display: flex;
  background: ${c.paper};
  font: 11px/14px ${sans};
`;

const Legend = styled.div`
  flex: none;
  align-self: flex-start;
  display: flex;
  justify-content: space-between;
  align-items: center;
  width: ${(p) => p.$w}px;
  height: 34px;
  margin: 8px 4px 0 ${(p) => p.$ml}px;
  padding: 0 5px 0 4px;
  border: 1px solid #d6e3ee;
`;

const Swatches = styled.span`
  display: grid;
  gap: 3px;
`;

const Swatch = styled.i`
  width: 11px;
  height: 11px;
  background: ${(p) => p.$color};
`;

const ChartCol = styled.div`
  flex: 1;
  padding-top: 6px;
`;

const LostLabel = styled.span`
  align-self: flex-end;
  flex: none;
  width: 86px;
  margin: 0 0 3px -86px;
`;

const tcpRows = [1, 2, 3];
const clientRows = [
  { n: 1, on: true, proto: "UDP", para: "−−−", rate: "50.00 Mbit/s", down: "50.00", unit: "Mbit/s" },
  { n: 2, proto: "TCP", para: "1", rate: "", down: "−−−", unit: "kbit/s" },
  { n: 3, proto: "TCP", para: "1", rate: "", down: "−−−", unit: "kbit/s" },
];

function Chart() {
  const left = [5, 10, 15, 20, 25, 30, 35, 40, 45, 50, 55, 60, 65];
  const right = [10, 20, 30, 40, 50, 60, 70, 80, 90];
  const cols = [1, 2, 3, 4, 5, 6, 7, 8];
  const yl = (v) => Math.round(433 - v * 6.18) + 0.5;
  const yr = (v) => Math.round(433 - v * 4.33) + 0.5;
  const xc = (n) => Math.round(n * 55.5) + 0.5;
  return (
    <svg width="502" height="473" viewBox="0 0 502 473" fontFamily="Liberation Sans, Arial, sans-serif" fontSize="12" fill="#111">
      <g stroke="#c2c2c2" strokeDasharray="5 3">
        {left.map((v) => <path key={v} d={`M${v < 10 ? 18 : 24} ${yl(v)}H499`} />)}
        {right.map((v) => <path key={v} d={`M0 ${yr(v)}H478`} />)}
        {cols.map((n) => <path key={n} d={`M${xc(n)} 0V433`} />)}
      </g>
      <rect x="61" y={yl(50)} width="11" height={433 - yl(50)} fill="#3333ff" />
      <rect x=".5" y=".5" width="499" height="433" fill="none" stroke="#777" />
      {left.map((v) => <text key={v} x="7" y={yl(v) + 4}>{v}</text>)}
      {right.map((v) => <text key={v} x="496" y={yr(v) + 4} textAnchor="end">{v}</text>)}
      <text x="4" y="16" fontSize="13">Mbit/s</text>
      <text x="495" y="16" fontSize="13" textAnchor="end">%</text>
      {cols.map((n) => (
        <g key={n} textAnchor="middle">
          <text x={xc(n)} y="449">{n}</text>
          <text x={xc(n) - 2} y="467" fontSize="16">---</text>
        </g>
      ))}
    </svg>
  );
}

function DataWindow() {
  return (
    <Window title="Data Application Measurement 1 - V3.7.11" x={1123} y={245} w={801} h={790}>
      <SigBody>
        <DataMain>
          <RanBox>
            <Group>
              <Label htmlFor="ran" $w={77}>Select RAN:</Label>
              <Select id="ran" value="" w={204} />
            </Group>
          </RanBox>
          <DataTabs>
            <TabClip>
              <Tab $w={68} $pad={3}>Overview</Tab>
              <Tab $w={50} $pad={0} $gap={6}><Led />Ping</Tab>
              <Tab $w={52} $h={22} $pad={0} $gap={6} $active><Led $on />IPerf</Tab>
              <Tab $w={95} $pad={0} $gap={6}><Led />Throughput</Tab>
              <Tab $w={77} $pad={0} $gap={6}><Led />DNS req.</Tab>
              <Tab $w={90} $pad={0} $gap={6}><Led />IP Logging</Tab>
              <Tab $w={146} $pad={0} $gap={6}><Led />IP Analysis/Security</Tab>
              <Tab $w={90} $pad={0} $gap={6}><Led />IP Replay</Tab>
            </TabClip>
            <TabScroll>
              <ArrowButton dir="left" disabled />
              <ArrowButton dir="right" />
            </TabScroll>
          </DataTabs>
          <Options>
            <Group>
              <Label htmlFor="dur" $w={85}>Test Duration:</Label>
              <Field id="dur" value="1000" w={54} h={22} />
              <Space $size={2} />
              <Select label="Duration unit" value="s" off w={30} />
            </Group>
            <Group>
              <Label htmlFor="ver" $w={48}>Version</Label>
              <Select id="ver" value="IPerf" w={61} />
            </Group>
          </Options>
          <Boxes>
            <Box $w={266}>
              <legend>Servers</legend>
              <Table>
                <colgroup>
                  <col width="36" /><col width="39" /><col width="59" /><col width="72" /><col />
                </colgroup>
                <thead>
                  <tr>
                    <Th $align="left" $pl={2}>Use</Th>
                    <th />
                    <th>{"Win. size\n(KB)"}</th>
                    <Th colSpan={2} $align="left" $pl={16} $color="#00a400">- Uplink -</Th>
                  </tr>
                </thead>
                <tbody>
                  {tcpRows.map((n) => (
                    <tr key={n}>
                      <td><Use><Check />{n}</Use></td>
                      <td><Cell $w={33} $align="center" $proto>TCP</Cell></td>
                      <td><CellWrap $w={59}><Field label={"Server window size " + n} value="0" h={19} /></CellWrap></td>
                      <td><Cell $w={67}>−−−</Cell></td>
                      <td><Cell $w={52} $align="left">Mbit/s</Cell></td>
                    </tr>
                  ))}
                </tbody>
              </Table>
            </Box>
            <Box>
              <legend>Clients</legend>
              <Table>
                <colgroup>
                  <col width="36" /><col width="39" /><col width="59" /><col width="35" />
                  <col width="106" /><col width="59" /><col />
                </colgroup>
                <thead>
                  <tr>
                    <Th $align="left" $pl={2}>Use</Th>
                    <th />
                    <th>{"Win. size\n(KB)"}</th>
                    <Th $align="left">{"Para.\nconn."}</Th>
                    <Th $align="left" $pl={7}>Bit rate</Th>
                    <Th colSpan={2} $align="left" $pl={16} $color="#0000ff">- Downlink -</Th>
                  </tr>
                </thead>
                <tbody>
                  {clientRows.map((r) => (
                    <tr key={r.n}>
                      <td><Use><Check defaultChecked={r.on} />{r.n}</Use></td>
                      <td><Cell $w={33} $align="center" $proto>{r.proto}</Cell></td>
                      <td><CellWrap $w={59}><Field label={"Client window size " + r.n} value="0" h={19} /></CellWrap></td>
                      <td><CellWrap $w={34}><Field label={"Parallel connections " + r.n} value={r.para} off={r.on} h={19} pad={r.on ? 2 : 4} /></CellWrap></td>
                      <td>
                        <CellWrap $w={105}>
                          <Field label={"Bit rate " + r.n} value={r.rate || "−−−"} off={!r.rate} align={r.rate ? "right" : "center"} h={19} pad={3} />
                        </CellWrap>
                      </td>
                      <td><Cell $w={54}>{r.down}</Cell></td>
                      <td><Cell $w={62} $align="left">{r.unit}</Cell></td>
                    </tr>
                  ))}
                </tbody>
              </Table>
            </Box>
          </Boxes>
          <ChartArea>
            <Legend $w={78} $ml={8}>
              <span>{"Uplink\nDownlink"}</span>
              <Swatches><Swatch $color="#00be00" /><Swatch $color="#3333ff" /></Swatches>
            </Legend>
            <LostLabel>Lost Packets (%):</LostLabel>
            <ChartCol><Chart /></ChartCol>
            <Legend $w={75} $ml={0}>
              <span>{"Lost\nPackets"}</span>
              <Swatch $color="#ff0000" />
            </Legend>
          </ChartArea>
          <Space $size={4} />
        </DataMain>
        <KeyColumn>
          <KeyHead $small>Iperf service</KeyHead>
          <Key text="Iperf" badge="RUN" run on />
          <Key text={"Configure\nServices"} />
          <Key text={"Expand\nTable"} drop />
          <Key text={"Quality of\n Service"} badge="OFF" />
          <Key text="Display" />
          <Slot $h={53} />
          <Key text={"Signaling\nParameter"} disabled />
          <Key text="..." badge="Off" disabled />
        </KeyColumn>
      </SigBody>
      <KeyFooter keys={["Select\nApplication...", "", "", "", "", "", "", "Config..."]} />
    </Window>
  );
}

export default function App() {
  return (
    <>
      <Global />
      <Desktop>
        <CmwWindow />
        <SignalingWindow />
        <ConfigWindow />
        <DataWindow />
        <Taskbar />
      </Desktop>
    </>
  );
}
